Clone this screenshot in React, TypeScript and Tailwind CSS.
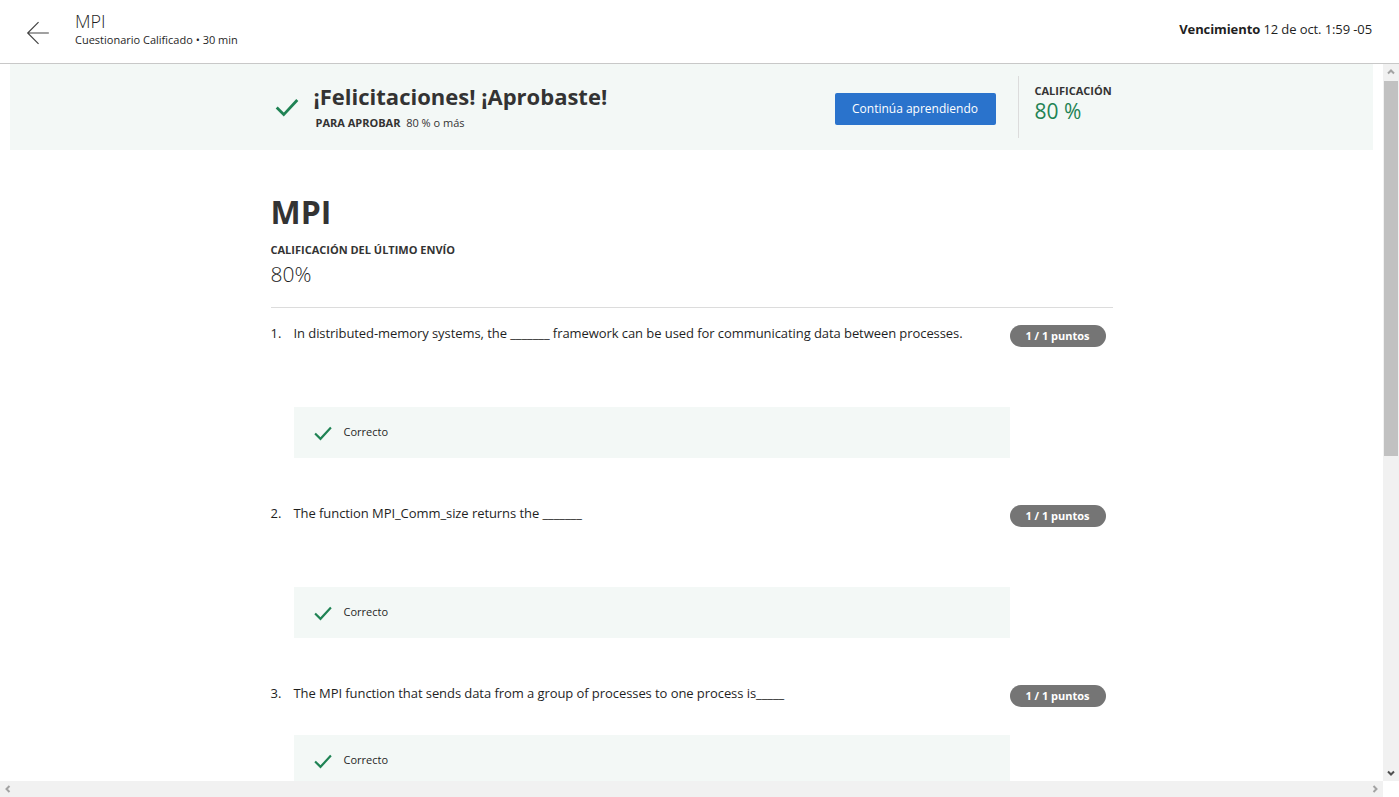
import React from 'react';

function Check({ className }: { className?: string }) {
  return (
    <svg viewBox="0 0 24 24" className={className} fill="none" stroke="currentColor" strokeWidth={2.6}>
      <path d="M2.5 12.5l6.5 6.5L21.5 5.5" />
    </svg>
  );
}

function Arrow({ dir }: { dir: 'up' | 'down' | 'left' | 'right' }) {
  const d = {
    up: 'M2 6.5L5 3.5L8 6.5',
    down: 'M2 3.5L5 6.5L8 3.5',
    left: 'M6.5 2L3.5 5L6.5 8',
    right: 'M3.5 2L6.5 5L3.5 8',
  }[dir];
  const color = dir === 'down' ? 'text-[#505050]' : 'text-[#a3a3a3]';
  return (
    <svg viewBox="0 0 10 10" className={`h-[10px] w-[10px] ${color}`} fill="none" stroke="currentColor" strokeWidth={2}>
      <path d={d} />
    </svg>
  );
}

const questions = [
  {
    n: 1,
    text: 'In distributed-memory systems, the _______ framework can be used for communicating data between processes.',
    gap: 'mt-[64px]',
  },
  { n: 2, text: 'The function MPI_Comm_size returns the _______', gap: 'mt-[64px]' },
  { n: 3, text: 'The MPI function that sends data from a group of processes to one process is_____', gap: 'mt-[32px]' },
];

export default function App() {
  return (
    <div className="h-[797px] w-[1399px] overflow-hidden bg-white text-[#1f1f1f]" style={{ fontFamily: '"Open Sans", sans-serif' }}>
      <header className="flex h-[64px] items-center border-b border-[#c8c8c8] pr-[27px]">
        <div className="flex w-[75px] justify-center pt-[2px]">
          <svg viewBox="0 0 24 24" className="h-[26px] w-[26px] text-[#444]" fill="none" stroke="currentColor" strokeWidth={1.1}>
            <path d="M22 12H2.5M12.5 2L2.5 12l10 10" />
          </svg>
        </div>
        <div className="flex flex-col pb-[6px]">
          <span className="text-[18px] leading-[22px] font-light text-[#1f1f1f]">MPI</span>
          <span className="text-[11px] leading-[16px] text-[#1f1f1f]">Cuestionario Calificado • 30 min</span>
        </div>
        <div className="ml-auto pb-[4px] text-[13px] tracking-[-0.1px] text-[#1f1f1f]">
          <span className="font-bold">Vencimiento</span> 12 de oct. 1:59 -05
        </div>
      </header>

      <div className="flex h-[717px]">
        <div className="w-[1383px] overflow-hidden">
          <div className="px-[10px]">
            <div className="flex h-[86px] bg-[#f3f8f6]">
              <div className="mx-auto flex w-[842px] items-center">
                <Check className="ml-[3px] h-[26px] w-[26px] text-[#1f8354]" />
                <div className="ml-[14px] flex flex-col pb-[2px]">
                  <span className="text-[22px] leading-[28px] font-bold text-[#333]">¡Felicitaciones! ¡Aprobaste!</span>
                  <span className="ml-[2px] mt-[6px] text-[11px] leading-[14px] text-[#333]">
                    <span className="font-bold">PARA APROBAR</span>&nbsp; 80 % o más
                  </span>
                </div>
                <button className="ml-auto mt-[3px] h-[32px] w-[161px] rounded-[2px] bg-[#2a73cc] text-[12px] text-white">
                  Continúa aprendiendo
                </button>
                <div className="ml-[22px] h-[62px] w-px bg-[#dcdcdc]" />
                <div className="ml-[16px] flex w-[78px] flex-col pb-[6px]">
                  <span className="text-[11px] leading-[14px] font-bold text-[#333]">CALIFICACIÓN</span>
                  <span className="text-[21px] leading-[26px] text-[#1f8354]">80 %</span>
                </div>
              </div>
            </div>

            <div className="mx-auto w-[842px] pt-[42px] pb-[40px]">
              <h1 className="text-[32px] leading-[40px] font-bold text-[#333]">MPI</h1>
              <div className="mt-[11px] text-[11px] leading-[14px] font-bold text-[#333]">CALIFICACIÓN DEL ÚLTIMO ENVÍO</div>
              <div className="mt-[3px] text-[21px] leading-[28px] font-light text-[#1f1f1f]">80%</div>
              <div className="mt-[19px] h-px bg-[#dcdcdc]" />

              {questions.map(q => (
                <div key={q.n} className={q.n === 1 ? 'mt-[15px]' : 'mt-[45px]'}>
                  <div className="flex h-[20px] items-start">
                    <span className="w-[23px] text-[13px] leading-[20px]">{q.n}.</span>
                    <span className="flex-1 text-[13px] leading-[20px] tracking-[-0.07px]">{q.text}</span>
                    <span className="mr-[7px] mt-[2px] flex h-[22px] w-[96px] shrink-0 items-center justify-center rounded-full bg-[#757575] text-[11px] font-bold text-white">
                      1 / 1 puntos
                    </span>
                  </div>
                  <div className={`${q.gap} ml-[23px] flex h-[51px] w-[716px] items-center bg-[#f3f8f6]`}>
                    <Check className="ml-[19px] h-[20px] w-[20px] text-[#1f8354]" />
                    <span className="ml-[11px] text-[11px] text-[#1f1f1f]">Correcto</span>
                  </div>
                </div>
              ))}
            </div>
          </div>
        </div>

        <div className="flex w-[16px] flex-col bg-[#f1f1f1]">
          <div className="flex h-[16px] items-center justify-center">
            <Arrow dir="up" />
          </div>
          <div className="mx-[1px] mt-[1px] h-[375px] bg-[#c1c1c1]" />
          <div className="flex-1" />
          <div className="flex h-[16px] items-center justify-center">
            <Arrow dir="down" />
          </div>
        </div>
      </div>

      <div className="flex h-[16px] bg-[#f1f1f1]">
        <div className="flex w-[16px] items-center justify-center">
          <Arrow dir="left" />
        </div>
        <div className="flex-1" />
        <div className="flex w-[16px] items-center justify-center">
          <Arrow dir="right" />
        </div>
        <div className="w-[16px] bg-white" />
      </div>
    </div>
  );
}
